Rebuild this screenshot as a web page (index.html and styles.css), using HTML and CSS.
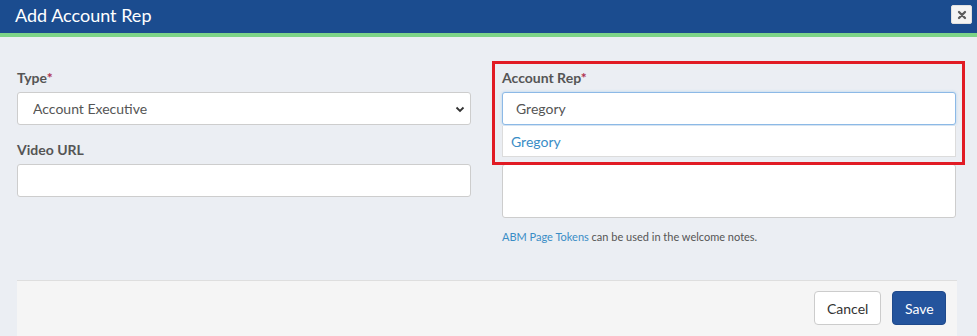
FILE: index.html
```html
<!DOCTYPE html>
<html>
<head>
<meta charset="utf-8">
<link rel="stylesheet" href="styles.css">
</head>
<body>
<div class="modal">
  <div class="modal-header">
    <h1 class="modal-title">Add Account Rep</h1>
    <button class="close-btn" type="button" aria-label="Close">
      <svg width="10" height="10" viewBox="0 0 10 10"><path d="M2 2 L8 8 M8 2 L2 8" stroke="#5c5c5c" stroke-width="2.3" stroke-linecap="round"/></svg>
    </button>
  </div>
  <div class="modal-body">
    <div class="form-grid">
      <div class="col">
        <div class="group">
          <label class="lbl">Type<span class="req">*</span></label>
          <div class="select-wrap">
            <select class="control select">
              <option>Account Executive</option>
            </select>
            <svg class="chev" width="10" height="7" viewBox="0 0 10 7"><path d="M1.5 1.5 L5 5 L8.5 1.5" fill="none" stroke="#333" stroke-width="1.8"/></svg>
          </div>
        </div>
        <div class="group">
          <label class="lbl">Video URL</label>
          <input class="control" type="text">
        </div>
      </div>
      <div class="col">
        <div class="group rep">
          <label class="lbl">Account Rep<span class="req">*</span></label>
          <input class="control focus" type="text" value="Gregory">
          <div class="menu"><span class="menu-item">Gregory</span></div>
          <div class="highlight"></div>
        </div>
        <div class="group notes">
          <textarea class="control area"></textarea>
          <p class="help"><a class="link">ABM Page Tokens</a> can be used in the welcome notes.</p>
        </div>
      </div>
    </div>
    <div class="modal-footer">
      <button class="btn btn-default" type="button">Cancel</button>
      <button class="btn btn-primary" type="button">Save</button>
    </div>
  </div>
</div>
</body>
</html>
```

FILE: styles.css
```css
* { box-sizing: border-box; }
html, body { margin: 0; padding: 0; }
body {
  background: #ebeef3;
  font-family: Lato, "Open Sans", "Noto Sans", sans-serif;
  color: #555;
  width: 977px;
  height: 336px;
  overflow: hidden;
}
.modal-header {
  height: 37px;
  background: #1b4c8f;
  border-bottom: 4px solid #7dd487;
  display: flex;
  align-items: flex-start;
  justify-content: space-between;
  padding: 0 5px 0 15px;
}
.modal-title {
  margin: 0;
  font-size: 18px;
  font-weight: 400;
  color: #fff;
  line-height: 30px;
}
.close-btn {
  margin-top: 5px;
  width: 21px;
  height: 19px;
  padding: 0;
  border: 1px solid #e0e0e0;
  border-radius: 2px;
  background: #f4f4f4;
  display: flex;
  align-items: center;
  justify-content: center;
}
.modal-body {
  padding: 31px 20px 0 17px;
}
.form-grid {
  display: grid;
  grid-template-columns: 454px 454px;
  column-gap: 31px;
  height: 212px;
}
.group { margin-bottom: 15px; position: relative; }
.lbl {
  display: block;
  font-size: 14px;
  font-weight: 700;
  line-height: 20px;
  margin-bottom: 4px;
  color: #555;
}
.req { color: #b0304f; }
.control {
  display: block;
  width: 100%;
  height: 33px;
  border: 1px solid #cdcdcd;
  border-radius: 3px;
  background: #fff;
  font-family: inherit;
  font-size: 14px;
  color: #555;
  padding: 0 13px;
  outline: none;
}
.select-wrap { position: relative; }
.select {
  -webkit-appearance: none;
  appearance: none;
  padding-left: 15px;
}
.chev { position: absolute; right: 6px; top: 14px; pointer-events: none; }
.focus {
  border-color: #8cb9e6;
  box-shadow: 0 0 3px rgba(102, 175, 233, 0.45);
}
.menu {
  position: absolute;
  left: 0;
  right: 0;
  top: 58px;
  height: 31px;
  background: #fff;
  border: 1px solid #dcdcdc;
  border-top: none;
  padding: 0 8px;
  display: flex;
  align-items: center;
  z-index: 2;
}
.menu-item { color: #3a8dc6; font-size: 14px; }
.highlight {
  position: absolute;
  left: -10px;
  right: -9px;
  top: -7px;
  height: 104px;
  border: 3px solid #e11b24;
  z-index: 3;
}
.notes { margin-top: 39px; margin-bottom: 0; }
.area { height: 54px; resize: none; }
.help {
  margin: 11px 0 0 0;
  font-size: 11px;
  line-height: 15px;
  color: #555;
}
.link { color: #3a8dc6; text-decoration: none; }
.modal-footer {
  border-top: 1px solid #dedede;
  background: #f5f5f5;
  padding: 10px 11px 11px 0;
  display: flex;
  justify-content: flex-end;
  gap: 11px;
}
.btn {
  height: 34px;
  border-radius: 4px;
  font-family: inherit;
  font-size: 14px;
  padding: 0 12px;
}
.btn-default {
  width: 67px;
  background: #fff;
  border: 1px solid #cccccc;
  color: #333;
}
.btn-primary {
  width: 54px;
  background: #24549d;
  border: 1px solid #1f4a8c;
  color: #fff;
}
```
